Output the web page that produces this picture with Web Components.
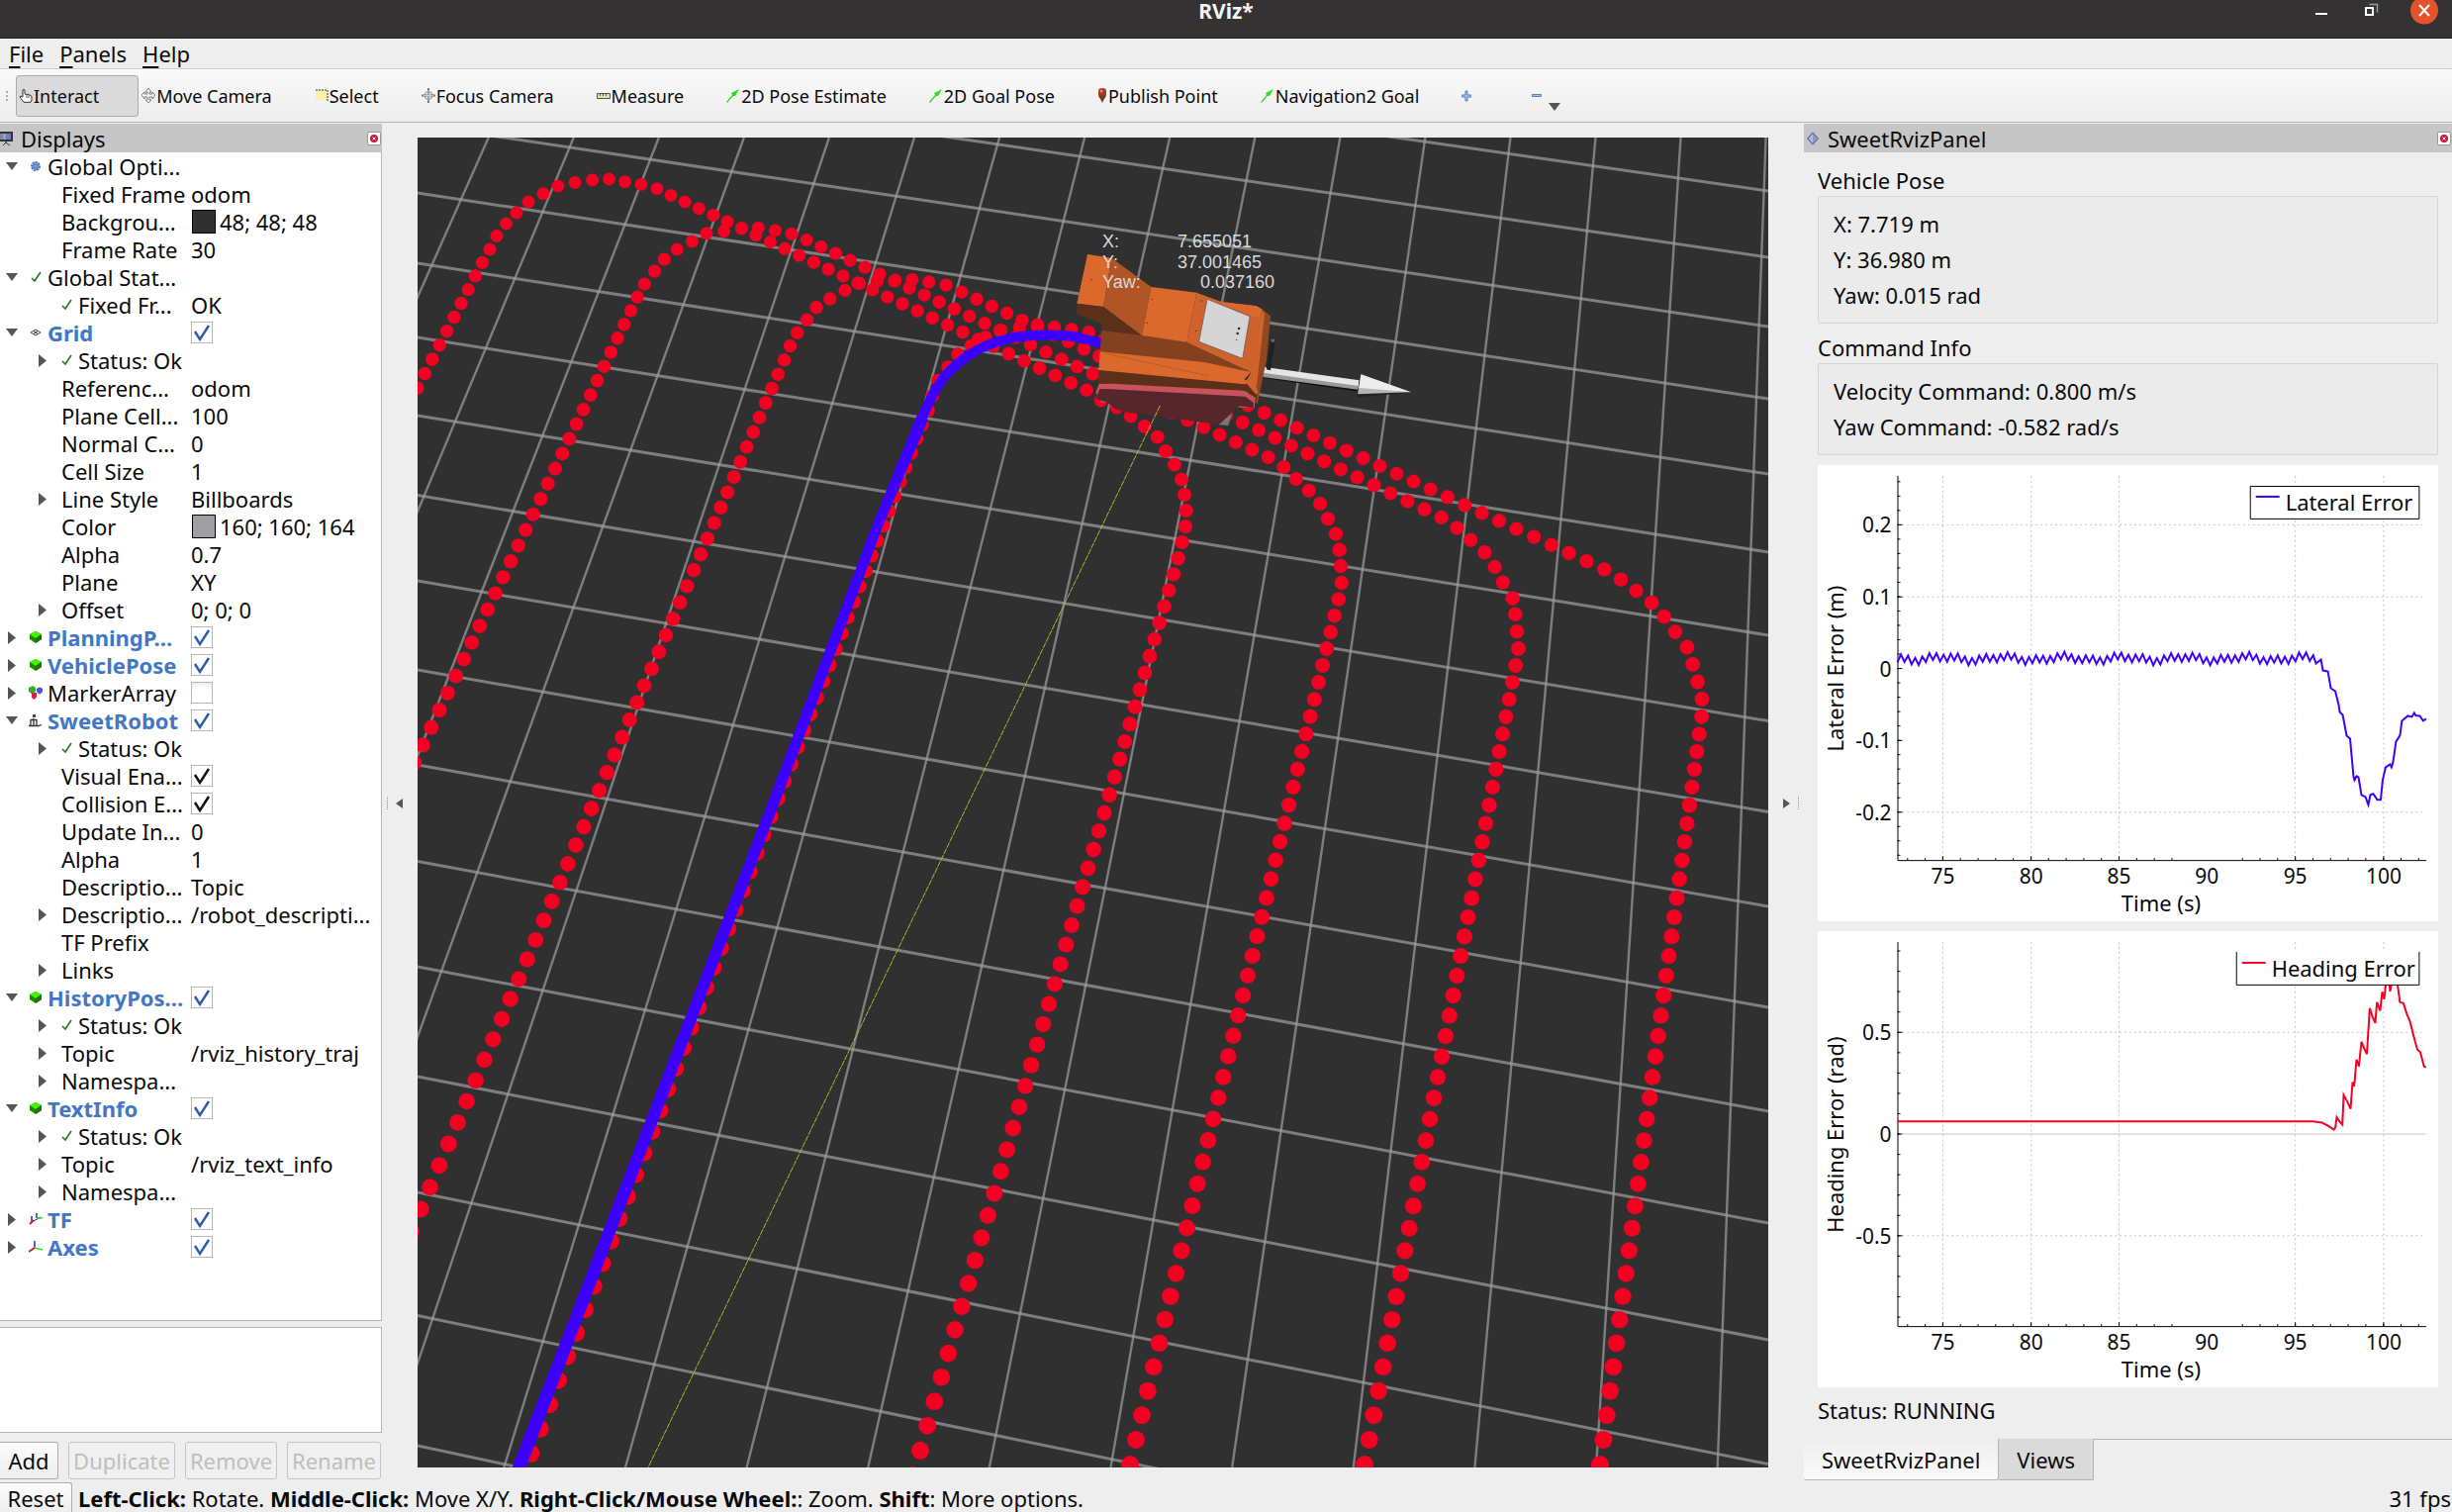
<!DOCTYPE html>
<html lang="en">
<head>
<meta charset="utf-8">
<title>RViz*</title>
<style>
html,body{margin:0;height:100%}
body{background:#eee;color:#0a0a0a;font-family:"Noto Sans","Open Sans",sans-serif;font-size:22px;line-height:28px;overflow:hidden}
</style>
</head>
<body>
<rviz-window></rviz-window>
<script>
const svg=(w,h,body,vb)=>`<svg width="${w}" height="${h}" viewBox="${vb||`0 0 ${w} ${h}`}" aria-hidden="true">${body}</svg>`;
const cube='<path d="M7 1 13 4v5L7 13 1 9V4z" fill="#1e8a00"/><path d="M7 1 13 4 7 8 1 4z" fill="#41f500"/><path d="M7 8 13 4v5L7 13z" fill="#237000"/>';
const cross='<path d="M7 0 10 4H8v2h3V4l3 3-3 4V9H8v3h2l-3 3-3-3h2V9H3v2L0 7l3-3v2h3V4H4z" fill="#f4f4f4" stroke="#666" stroke-width=".8"/>';
const arrow='<path d="M0 13 6 6 5 4 13 0 9 7 7 7 1 14z" fill="#2be01c"/>';
const icons={
  hand:svg(14,15,'<path d="M4 9V2q1-1.500 2 0v4l5 1q2 .5 2 2v3l-1 2.300H5L1 9q0-2 3 0z" fill="#fff" stroke="#333"/><path d="M8 7v3M10 7.500V10" stroke="#333" stroke-width=".8"/>'),
  move:svg(14,15,cross),
  select:svg(14,14,'<path d="M1 1h12v10H1z" fill="#faf3a9"/><path d="M1 1h12v11" fill="none" stroke="#333" stroke-dasharray="2 1"/>'),
  focus:svg(14,15,'<circle cx="7" cy="7.500" r="4" fill="none" stroke="#888"/><path d="M7 0v15M0 7.500h14" stroke="#777" stroke-width="2"/><path d="M7 2v11M2 7.500h10" stroke="#eee" stroke-width=".7"/>'),
  measure:svg(14,14,'<path d="M.5 4.500h13v5H.5z" fill="#e5dfae" stroke="#555"/><path d="M3.500 4v3M6.500 4v3M9.500 4v3" stroke="#555"/>'),
  arrow:svg(14,14,arrow),
  pin:svg(10,15,'<path d="M1 3q0-3 4-3t4 3v4q0 2-2 4l-2 4-2-4Q1 9 1 7z" fill="#a23a24"/><path d="M2 7q3 2 6 0l-3 7z" fill="#62401f"/><circle cx="4" cy="3" r="1.500" fill="#f28a74"/>'),
  plus:svg(10,12,'<path d="M4 1h2v4h4v2H6v4H4V7H0V5h4z" fill="#a9c3ea" stroke="#557fbe"/>'),
  minus:svg(10,12,'<path d="M.5 4.500h9v2h-9z" fill="#a9c3ea" stroke="#557fbe"/>'),
  gear:svg(12,12,'<circle cx="6" cy="6" r="4" fill="#85a9dc" stroke="#4a74b5" stroke-width="2" stroke-dasharray="2 1"/><circle cx="6" cy="6" r="2" fill="none" stroke="#4a74b5"/>'),
  check:svg(11,14,'<path d="M1 8 4 11 10 2" fill="none" stroke="#1c7a1c" stroke-width="1.600"/>'),
  grid:svg(12,12,'<path d="M1 6 6 3l5 3-5 3zM3.500 4.500l5 3M8.500 4.500l-5 3" fill="none" stroke="#444"/>'),
  cube:svg(14,14,cube),
  markers:svg(14,14,'<path d="M0 2 4 0 7 2V6L3 8 0 6z" fill="#27b51d"/><path d="M8 3q3-3 6 0v3l-3 3-3-3z" fill="#4a56c9"/><path d="M3 7h5v4l-2 3-3-2z" fill="#d5213f"/>'),
  robot:svg(14,14,'<path d="M2 6v6M5 5v7M8 6v6M0 12.500h10l3-1M2 6.500h6" fill="none" stroke="#333" stroke-width="1.300"/><path d="M4 1h3v3H4z" fill="#2d3ba0"/>'),
  tf:svg(14,14,'<path d="M1 12 5 8" stroke="#e01b1b" stroke-width="2"/><path d="M3 9V4M8 6V1" stroke="#2b2bdc" stroke-width="1.500"/><path d="M5 9 12 5" stroke="#333"/><path d="M9 6h5" stroke="#37d51f" stroke-width="1.500"/>'),
  axes:svg(14,14,'<path d="M6 8 0 12" stroke="#e01b1b" stroke-width="2"/><path d="M6 8V1" stroke="#2b2bdc" stroke-width="1.500"/><path d="M6 8 14 10" stroke="#37d51f" stroke-width="1.500"/>'),
  monitor:svg(14,16,'<path d="M0 1h13v10H0z" fill="#333"/><path d="M0 3h3v6H0z" fill="#8b7db0"/><path d="M3 3h3v6H3z" fill="#68c486"/><path d="M6 3h5v6H6z" fill="#7c73cc"/><path d="M6 10v3M3 15l3-3 4 3" stroke="#333" fill="none"/>'),
  diamond:svg(12,14,'<path d="M6 1 11.400 7 6 13 .6 7z" fill="#8e99c8" stroke="#4a5588"/><path d="M6 2v10L2 7z" fill="#b3bce0"/>')
};
const define=(name,html,after)=>{
  const t=document.createElement('template');t.innerHTML=html;
  customElements.define(name,class extends HTMLElement{
    connectedCallback(){
      if(this.shadowRoot)return;
      const r=this.attachShadow({mode:'open'});
      r.append(t.content.cloneNode(true));
      if(after)after(this,r);
    }
  });
};

define('title-bar',`<style>
:host{display:grid;grid-template-columns:1fr auto 1fr;height:38px;background:#353233;border-bottom:1px solid #1f1d1e;color:#f4f4f4;flex:none}
h1{margin:0;grid-column:2;font-size:21px;line-height:22px;font-weight:700}
nav{justify-self:end;display:flex;gap:30px;padding-right:14px;height:25px}
button{border:0;padding:0;background:none;display:block;height:25px}svg{display:block}
</style><h1><slot></slot></h1><nav>
<button aria-label="Minimize">${svg(20,25,'<path d="M4 13h12v2H4z" fill="#fff"/>')}</button>
<button aria-label="Restore">${svg(20,25,'<path d="M8.500 4.500h8v8" fill="none" stroke="#999" stroke-width="1.500"/><path d="M5 8h7v7H5z" fill="none" stroke="#fff" stroke-width="2"/>')}</button>
<button aria-label="Close">${svg(28,25,'<circle cx="14" cy="10.500" r="14" fill="#e2542b"/><path d="M9 5l10 11M19 5 9 16" stroke="#fff" stroke-width="2"/>')}</button></nav>`);

define('menu-bar',`<style>
:host{display:flex;gap:16px;padding-left:9px;height:30px;border-bottom:1px solid #cfcfcf;flex:none}
button{border:0;background:none;padding:0;font:inherit;color:inherit;line-height:30px}
u{text-underline-offset:4px;text-decoration-thickness:2px}
</style><button><u>F</u>ile</button><button><u>P</u>anels</button><button><u>H</u>elp</button>`);

define('tool-button',`<style>
:host{display:block}
button{display:flex;align-items:center;gap:1px;height:42px;padding:0 39px 0 2px;border:1px solid transparent;border-radius:3px;background:none;font:inherit;font-size:18px;color:inherit;white-space:nowrap}
:host([active]) button{background:#dadada;border-color:#adadad}
svg{display:block}
</style><button><span class="i"></span><slot></slot></button>`,(el,r)=>{
  r.querySelector('.i').innerHTML=icons[el.getAttribute('icon')];
  const l=el.getAttribute('label');if(l)r.querySelector('button').setAttribute('aria-label',l);
});

define('tool-bar',`<style>
:host{display:flex;align-items:center;height:53px;padding-left:5px;background:linear-gradient(#fafafa,#ededed);border-bottom:1px solid #b4b4b4;flex:none}
.grip{width:4px;height:12px;margin-right:7px;background:radial-gradient(#aaa 1px,transparent 1px) 0 0/4px 4px}
.more{border:0;background:none;padding:22px 0 0;margin-left:-33px}.more svg{display:block}
[icon=plus]{margin-right:18px}
</style><span class="grip"></span>
<tool-button icon="hand" active>Interact</tool-button>
<tool-button icon="move">Move Camera</tool-button>
<tool-button icon="select">Select</tool-button>
<tool-button icon="focus">Focus Camera</tool-button>
<tool-button icon="measure">Measure</tool-button>
<tool-button icon="arrow">2D Pose Estimate</tool-button>
<tool-button icon="arrow">2D Goal Pose</tool-button>
<tool-button icon="pin">Publish Point</tool-button>
<tool-button icon="arrow">Navigation2 Goal</tool-button>
<tool-button icon="plus" label="Add tool"></tool-button>
<tool-button icon="minus" label="Remove tool"></tool-button>
<button class="more" aria-label="More">${svg(12,8,'<path d="M0 0h12L6 8z" fill="#555"/>')}</button>`);

define('dock-header',`<style>
:host{display:flex;align-items:center;height:29px;background:#c6c6c6;flex:none}
:host([icon=diamond]){padding-left:3px}
.i{width:21px;display:flex}h2{font:inherit;margin:0;flex:1}
button{width:14px;height:14px;padding:0;margin-right:1px;border:1px solid #999;border-radius:2px;background:#fff;display:flex;align-items:center;justify-content:center}
svg{display:block;flex:none}
</style><span class="i"></span><h2><slot></slot></h2><button aria-label="Close">${svg(10,10,'<circle cx="5" cy="5" r="4" fill="#c8193c"/><path d="M3.500 3.500l3 3M6.500 3.500l-3 3" stroke="#fff"/>')}</button>`,(el,r)=>{
  r.querySelector('.i').innerHTML=icons[el.getAttribute('icon')];
});

// level, expander (o open, c closed, - none), icon, name, value, flags (b = blue bold)
const rows=[
[0,'o','gear','Global Opti...',''],[1,'-','','Fixed Frame','odom'],[1,'-','','Backgrou...','#303030|48; 48; 48'],[1,'-','','Frame Rate','30'],
[0,'o','check','Global Stat...',''],[1,'-','check','Fixed Fr...','OK'],
[0,'o','grid','Grid','[x]','b'],[1,'c','check','Status: Ok',''],[1,'-','','Referenc...','odom'],[1,'-','','Plane Cell...','100'],[1,'-','','Normal C...','0'],[1,'-','','Cell Size','1'],[1,'c','','Line Style','Billboards'],[1,'-','','Color','#a0a0a4|160; 160; 164'],[1,'-','','Alpha','0.7'],[1,'-','','Plane','XY'],[1,'c','','Offset','0; 0; 0'],
[0,'c','cube','PlanningP...','[x]','b'],[0,'c','cube','VehiclePose','[x]','b'],[0,'c','markers','MarkerArray','[ ]'],
[0,'o','robot','SweetRobot','[x]','b'],[1,'c','check','Status: Ok',''],[1,'-','','Visual Ena...','[k]'],[1,'-','','Collision E...','[k]'],[1,'-','','Update In...','0'],[1,'-','','Alpha','1'],[1,'-','','Descriptio...','Topic'],[1,'c','','Descriptio...','/robot_descripti...'],[1,'-','','TF Prefix',''],[1,'c','','Links',''],
[0,'o','cube','HistoryPos...','[x]','b'],[1,'c','check','Status: Ok',''],[1,'c','','Topic','/rviz_history_traj'],[1,'c','','Namespa...',''],
[0,'o','cube','TextInfo','[x]','b'],[1,'c','check','Status: Ok',''],[1,'c','','Topic','/rviz_text_info'],[1,'c','','Namespa...',''],
[0,'c','tf','TF','[x]','b'],[0,'c','axes','Axes','[x]','b']];

define('property-tree',`<style>
:host{display:block;flex:1;min-height:0;overflow:hidden;background:#fff;border:1px solid #b4b4b4;border-width:0 1px 1px 0}
table{border-collapse:collapse;table-layout:fixed;width:100%}
td{padding:0;height:28px;line-height:28px;white-space:nowrap}
td:first-child{width:193px}
.n,.v{display:flex;align-items:center;height:28px}
.e{width:24px;display:flex;justify-content:center;flex:none}
.l0 .i{width:24px;display:flex;justify-content:center}
.l1{padding-left:30px}.l1 .e{width:32px;justify-content:flex-start;padding-left:9px;box-sizing:border-box}.l1 .i{width:17px}
.l1 .i:empty{display:none}
svg{display:block}
b{color:#4277c6;font-weight:700}
.s{width:22px;height:22px;border:1px solid #000;margin:0 4px 0 1px}
input{appearance:none;margin:0;width:22px;height:22px;border:1px solid #b8b8b8;background:#fff linear-gradient(#eee,#fff 30%)}
input:checked{background:no-repeat center/20px 20px var(--tick)}
</style><table aria-label="Displays"><tbody></tbody></table>`,(el,r)=>{
  const open=svg(12,8,'<path d="M0 0h12L6 8z" fill="#555"/>'),closed=svg(8,13,'<path d="M0 0v13l8-6.500z" fill="#555"/>');
  const tick=c=>`url("data:image/svg+xml,${encodeURIComponent(`<svg xmlns='http://www.w3.org/2000/svg' viewBox='0 0 20 20'><path d='M3 9 8 17 17 3' fill='none' stroke='${c}' stroke-width='2.500'/></svg>`)}")`;
  el.style.setProperty('--blue',tick('#2f5ea6'));el.style.setProperty('--black',tick('#111'));
  r.querySelector('tbody').innerHTML=rows.map(([lv,ex,ic,name,val,f])=>{
    let v=val;
    if(/^\[/.test(val))v=`<input type="checkbox" aria-label="${name}" style="--tick:var(--${val==='[k]'?'black':'blue'})" ${val==='[ ]'?'':'checked'}>`;
    else if(val[0]==='#'){const p=val.split('|');v=`<span class="s" style="background:${p[0]}"></span>${p[1]}`}
    return `<tr><td><div class="n l${lv}"><span class="e">${ex==='o'?open:ex==='c'?closed:''}</span><span class="i">${ic?icons[ic]:''}</span>${f?`<b>${name}</b>`:`<span>${name}</span>`}</div></td><td><div class="v">${v}</div></td></tr>`;
  }).join('');
});

define('displays-panel',`<style>
:host{display:flex;flex-direction:column;width:386px;flex:none}
.help{height:105px;margin-top:6px;background:#fff;border:1px solid #b4b4b4;border-left:0;flex:none}
.b{display:grid;grid-template-columns:59fr 108fr 93fr 95fr;gap:10px;padding:9px 1px 3px 0;flex:none}
button{min-width:0;height:38px;padding:0;font:inherit;color:#0a0a0a;border:1px solid #adadad;border-radius:3px;background:linear-gradient(#fcfcfc,#eee)}
button:first-child{border-left:0;border-radius:0 3px 3px 0}
button:disabled{color:#bebebe;border-color:#c4c4c4;background:#f0f0f0}
</style><dock-header icon="monitor">Displays</dock-header><property-tree></property-tree><div class="help"></div>
<div class="b"><button>Add</button><button disabled>Duplicate</button><button disabled>Remove</button><button disabled>Rename</button></div>`);

define('dock-gutter',`<style>
:host{display:flex;box-sizing:border-box;align-items:center;gap:8px;width:36px;padding:0 5px;flex:none}
:host([side=right]){flex-direction:row-reverse}
i{width:0;height:13px;border-left:1px dotted #999}button{border:0;padding:0;background:none}svg{display:block}
:host([side=right]) svg{transform:rotate(180deg)}
</style><i></i><button aria-label="Collapse">${svg(7,10,'<path d="M7 0v10L0 5z" fill="#555"/>')}</button>`);

// Past waypoints. Runs are [x0,y0,x1,y1,steps] spaced evenly on the ground plane; pairs are single points.
const HORIZON=3023;
const runs=[
[421.8,392.1,487.4,265.3,9],[678,197.4,1098.1,394.3,28],[1190.6,564.3,1094.1,896.4,19],[1094.1,896.4,922.7,1491,27],
[418.7,770.6,644.1,300.1,30],[815.1,242.5,1104.4,377.8,19],[1104.4,377.8,1200.3,424.3,6],[1200.3,424.3,1281.7,462.1,5],[1352.7,605.7,1270.5,946.2,19],[1270.5,946.2,1142,1480,24],
[415.5,1244.6,597.7,817.1,21],[597.7,817.1,798.6,349.6,29],[971.8,295.2,1111.1,359.9,9],[1111.1,359.9,1255.8,426.8,9],[1255.8,426.8,1456.7,522.9,12],[1531.7,672.5,1479.9,946.4,15],[1479.9,946.4,1379,1480,24],
[786,806.7,527,1494,32],[786,806.7,932,429.1,24],[1100.4,335.8,1277.7,417.1,11],[1277.7,417.1,1621.4,575.4,20],[1719.6,724.3,1689.3,946.4,12],[1689.3,946.4,1617,1480,24]];
const single=[495,252,502,238.5,511.5,226,522,215,534,204,549,195.6,564,188,581,184.5,598.6,182,615.5,181,631.6,183.6,648,186.3,664,190.7,
1112.7,404.7,1128.7,411.7,1142.7,420.7,1156.7,431,1169.7,441.7,1178,456,1187,469.6,1194,484.6,1197,500,1198.7,516,1198,532,1194.6,548,
651.3,287,661.5,274,671.3,262,684.3,252,699.5,244,714,235.8,731.6,233.6,749.5,230.4,766.4,230.4,783.4,233,800,236.3,
1297.3,472,1309.8,484,1322.8,495.7,1334,509,1342,524.3,1350,539.6,1353.6,555.7,1355,572,1355.8,589,
805.7,336.3,815.5,323.3,825,310.8,838.8,302,854,293.4,868.7,286.3,886.5,284,904.8,283,921.8,282.7,938.8,285,956.2,288,
1472.3,533.6,1486.2,545.7,1500.4,558.2,1510.7,573,1518.8,588.6,1528.6,604.6,1531.3,620.7,1533,638.2,1534.4,655.4,
938,414.8,942.3,400,948,384.5,958,371,967.8,358,981.2,349.6,996,340.7,1011.5,333.6,1030.3,331,1048.6,328.2,1065.5,330.4,1083,333,
1638,585.7,1653.6,597,1669.2,609,1681.7,623.2,1693,638.6,1705,654,1710.7,671.4,1715.6,689,1720,706.4];
const rowEnds=[[-3,193],[60,260],[126,330],[195,403],[266,479],[341,558],[420,642],[500.5,728.6],[587,820.4],[677,916],[773,1018],[870.5,1123],[977,1236],[1088,1354],[1205,1479.6],[1329.5,1612],[1461,1752]];

define('scene-view',`<style>
:host{display:block;flex:1;min-width:0;margin:14px 0 15px;background:#303030;overflow:hidden}
svg{display:block;width:100%;height:100%}
text{font:18px "Liberation Sans",Arial,sans-serif;fill:#dadada}
</style><svg viewBox="422 139 1365 1344" preserveAspectRatio="xMidYMid slice" role="img" aria-label="3D view">
<g class="grid" stroke="#a0a0a4" stroke-opacity=".7" fill="none"></g>
<g class="dots" fill="#f30022"></g>
<path d="M511 1500 525 1500 792 800 892 532 938 424 927 419 881 532 780 800z" fill="#3c00ff"/>
<path d="M931 424Q942 397 954 381Q969 364 989 353Q1009 343 1032 340Q1058 337 1085 340L1114 347" fill="none" stroke="#3c00ff" stroke-width="10"/>
<g transform="translate(1080 230) scale(.3334)">
<path d="M588 444 878 489 880 497 585 455z" fill="#111"/>
<path d="M590 422 880 463 877 490 588 448z" fill="#e6e6e6"/><path d="M590 440 878 480 877 491 588 453z" fill="#9a9a9a"/>
<path d="M886 445 1037 500 872 514z" fill="#222"/><path d="M886 445 1037 499 876 505z" fill="#b5b5b5"/><path d="M886 445 1037 499 880 486z" fill="#ececec"/>
<path d="M612 338 626 345 612 433 599 430z" fill="#202020"/><path d="M613 338h11v9h-11z" fill="#666"/>
<path d="M57 81 130 92 105 240 25 230z" fill="#dc692c"/>
<path d="M130 92 250 180 222 328 105 240z" fill="#b05526"/>
<path d="M25 230 105 240 222 328 100 315V292L25 262z" fill="#5b2f18"/>
<path d="M100 312 222 326 358 346 555 440 410 410 95 378z" fill="#83411f"/>
<path d="M250 180 388 197 358 347 222 327z" fill="#dc692c"/>
<path d="M388 197 462 225 570 238 590 250 556 440 358 347z" fill="#cf632b"/>
<path d="M420 211 462 225 570 238 586 250 580 272 549 266z" fill="#dc692c"/>
<path d="M586 247 612 268 600 400 572 535 545 512 555 440z" fill="#8f4822"/>
<path d="M586 250 594 262 570 480 533 476 552 440z" fill="#cf632b"/>
<path d="M95 376 410 408 552 438 533 460 548 480 91 432z" fill="#dc692c"/>
<path d="M91 432 533 475 560 470 572 500 568 530 540 497 90 476z" fill="#5b2f18"/>
<path d="M533 465 555 450 575 500 568 506z" fill="#cf632b"/>
<path d="M82 500 92 474 130 473 530 494 566 515 563 547 100 530z" fill="#c8535b"/>
<path d="M82 518 94 489 130 490 535 512 560 530V547L518 541 455 598 330 580 180 560 140 550 120 532z" fill="#56272a"/>
<path d="M455 598 495 562 484 600z" fill="#777"/>
<path d="M420 217 549 269 527 397 395 346z" fill="#d5d5d5" stroke="#555" stroke-width="2"/>
<g fill="#3a2a20"><circle cx="516" cy="306" r="4"/><circle cx="512" cy="321" r="4"/><circle cx="509" cy="340" r="2"/><circle cx="69" cy="158" r="2"/><circle cx="253" cy="217" r="2"/><circle cx="238" cy="289" r="2"/><circle cx="403" cy="222" r="2"/><circle cx="386" cy="313" r="2"/></g>
<path d="M110 381 425 450M400 400 545 432" stroke="#8a431f" stroke-width="2" stroke-dasharray="6 4" fill="none"/>
</g>
<path d="M1172.300 410 655 1483" stroke="#b5b533" stroke-width="1" stroke-dasharray="6 1"/>
<text x="1114" y="250">X:</text><text x="1190" y="250">7.655051</text>
<text x="1114" y="271">Y:</text><text x="1190" y="271">37.001465</text>
<text x="1114" y="291">Yaw:</text><text x="1213" y="291">0.037160</text>
</svg>`,(el,r)=>{
  let g='';
  for(let i=-7;i<17;i++)g+=`<path stroke-width="2.400" d="M${493.7+86.06*i} 139L${-103.9+122.64*i} 1483"/>`;
  for(const [a,b] of rowEnds)g+=`<path stroke-width="3" d="M422 ${a}L1787 ${b}"/>`;
  r.querySelector('.grid').innerHTML=g;
  const pts=[];
  for(let k=0;k<single.length;k+=2)pts.push([single[k],single[k+1]]);
  for(const [x0,y0,x1,y1,n] of runs){
    const q0=1/(y0+HORIZON),q1=1/(y1+HORIZON);
    for(let k=0;k<=n;k++){const t=k/n,q=q0+(q1-q0)*t,p=x0*q0+(x1*q1-x0*q0)*t;pts.push([p/q,1/q-HORIZON])}
  }
  r.querySelector('.dots').innerHTML=pts.map(([x,y])=>`<circle cx="${x.toFixed(1)}" cy="${y.toFixed(1)}" r="${((y+HORIZON)*.002).toFixed(1)}"/>`).join('');
});

define('info-group',`<style>
:host{display:block;flex:none}
h3{font:inherit;margin:0;line-height:28px;padding-bottom:2px}
div{border:1px solid #d4d4d4;border-radius:2px;background:#ebebeb;padding:9px 15px 10px;line-height:36px}
</style><h3></h3><div><slot></slot></div>`,(el,r)=>{r.querySelector('h3').textContent=el.getAttribute('heading')});

let noise='';
for(let x=80,k=0;x<503;x+=3.6,k++)noise+=`${x.toFixed(1)},${(196+(k%2?-1:1)*(3.700+1.500*Math.sin(k*2.3))+1.800*Math.sin(k*.37)).toFixed(1)} `;
const plots={
 lateral:{name:'Lateral Error',y:'Lateral Error (m)',color:'#3c00ff',lx:437,
  ticks:[[60.5,'0.2',1],[133.5,'0.1',1],[206,'0',0],[279,'-0.1',0],[351.5,'-0.2',1]],minor:14.55,
  pts:noise+'504,201 509,197 511,208 516,209 519,226 523.5,229 527,243 528,250 531,253 535,274 538.5,277 542,316 543,319 545,315 547,316 550,334 554,336 557,344 559,334 562,333 566,339 569.5,339 571.5,319 574.5,306 579,303 580.5,306 582,301 585,280 589,274 591,259 597,254 601,255 603.5,251 605,253.5 609,254 612.5,259 615.5,257'},
 heading:{name:'Heading Error',y:'Heading Error (rad)',color:'#f30022',lx:423,zero:205.5,cut:1,
  ticks:[[102.5,'0.5',1],[205.5,'0',0],[308.5,'-0.5',1]],minor:20.6,
  pts:'80,192.7 501,192.7 510,194 516,197 522,201 523.5,199 525,188.5 528,193 530.7,196 532,166 535.4,172 539,180 541,153 542.7,157 545,130 547.4,137 550,112 552.5,118 555.5,124.5 558.4,78 561,86 564,93 565.7,72 569,80.5 571,61.5 573,69 575,50 578,50 579,61 581,50 586,50 589,72 592.5,73 596,84 599,91 603.6,109 606.6,120 609.6,122.5 613.4,137 615.5,138'}};
define('error-plot',`<style>
:host{display:block;flex:1;min-height:0;background:#fff}
svg{display:block;width:100%;height:100%}
text{font-size:22px;fill:#0a0a0a}
.t{font-size:21px}
</style><svg viewBox="0 0 627 462"></svg>`,(el,r)=>{
  const p=plots[el.getAttribute('series')];let s='',t='';
  const xs=[[126,75],[215.5,80],[304.5,85],[393.5,90],[483,95],[572.5,100]];
  for(const [x,n] of xs){
    if(n!==90)s+=`<path d="M${x} 11V400" stroke="#c4c4c4" stroke-dasharray="2 3"/><path d="M${x} 396V400" stroke="#000"/>`;
    t+=`<text class="t" x="${x}" y="424" text-anchor="middle">${n}</text>`;
  }
  for(const [y,n,line] of p.ticks){
    if(line)s+=`<path d="M80 ${y}H615" stroke="#c4c4c4" stroke-dasharray="2 3"/>`;
    s+=`<path d="M80 ${y}h5" stroke="#000"/>`;
    t+=`<text class="t" x="74" y="${y+8}" text-anchor="end">${n}</text>`;
  }
  const z=p.ticks.find(k=>k[1]==='0')[0];
  for(let k=-18;k<19;k++){const y=z+k*p.minor;if(y>14&&y<398)s+=`<path d="M80 ${y}h3" stroke="#000"/>`}
  for(let x=126-35.7;x<615;x+=17.85)if(Math.abs(x-393.5)>20)s+=`<path d="M${x} 398V400" stroke="#000"/>`;
  if(p.zero)s+=`<path d="M84 ${p.zero}H615" stroke="#c4c4c4"/>`;
  s+=`<path d="M80.500 11V400.500H615.500" fill="none" stroke="#000"/>`;
  s+=`<polyline points="${p.pts}" fill="none" stroke="${p.color}" stroke-width="2"/>`;
  s+=`<path d="M${p.lx} 20H608V54H${p.lx}z" fill="#fff"/><path d="${p.cut?`M${p.lx}.5 21V54.500H608.500V21`:`M${p.lx}.5 21.500H608.500V54.500H${p.lx}.5z`}" fill="none" stroke="#000"/><path d="M${p.lx+6} 32h24" stroke="${p.color}" stroke-width="2"/><text x="${p.lx+36}" y="46">${p.name}</text>`;
  t+=`<text x="347" y="452" text-anchor="middle">Time (s)</text><text transform="translate(25 206) rotate(-90)" text-anchor="middle">${p.y}</text>`;
  r.querySelector('svg').innerHTML=s+t;
});

define('sweet-panel',`<style>
:host{display:flex;flex-direction:column;width:655px;flex:none}
main{flex:1;min-height:0;display:flex;flex-direction:column;gap:10px;padding:14px 14px 15px}
p{margin:0;line-height:26px}
.tabs{display:flex;height:42px;margin-bottom:2px;border-top:1px solid transparent;flex:none}
.tabs::after{content:"";flex:1;border-top:1px solid #b4b4b4}
.tabs button{font:inherit;color:inherit;padding:0 18px;border:1px solid #b4b4b4;border-top:0;border-left:0;background:#dadada}
.tabs button[aria-selected=true]{background:linear-gradient(#eee,#fbfbfb);border-radius:0 0 3px 3px}
</style><dock-header icon="diamond">SweetRvizPanel</dock-header><main>
<info-group heading="Vehicle Pose">X: 7.719 m<br>Y: 36.980 m<br>Yaw: 0.015 rad</info-group>
<info-group heading="Command Info">Velocity Command: 0.800 m/s<br>Yaw Command: -0.582 rad/s</info-group>
<error-plot series="lateral"></error-plot><error-plot series="heading"></error-plot>
<p>Status: RUNNING</p></main>
<div class="tabs" role="tablist"><button role="tab" aria-selected="true">SweetRvizPanel</button><button role="tab" aria-selected="false">Views</button></div>`);

define('status-bar',`<style>
:host{display:flex;align-items:stretch;height:30px;flex:none}
button{font:inherit;line-height:28px;color:inherit;height:30px;width:73px;padding:1px 0 0;border:1px solid #adadad;border-left:0;border-bottom:0;border-radius:0 3px 0 0;background:linear-gradient(#fcfcfc,#eee);margin-right:6px}
span{padding-top:2px}
.f{margin-left:auto;padding-right:1px}
</style><button>Reset</button><span><b>Left-Click:</b> Rotate. <b>Middle-Click:</b> Move X/Y. <b>Right-Click/Mouse Wheel:</b>: Zoom. <b>Shift</b>: More options.</span><span class="f">31 fps</span>`);

define('rviz-window',`<style>
:host{display:flex;flex-direction:column;height:100vh}
.w{flex:1;min-height:0;display:flex;padding-top:1px}
</style><title-bar>RViz*</title-bar><menu-bar></menu-bar><tool-bar></tool-bar>
<div class="w"><displays-panel></displays-panel><dock-gutter side="left"></dock-gutter><scene-view></scene-view><dock-gutter side="right"></dock-gutter><sweet-panel></sweet-panel></div>
<status-bar></status-bar>`);
</script>
</body>
</html>
